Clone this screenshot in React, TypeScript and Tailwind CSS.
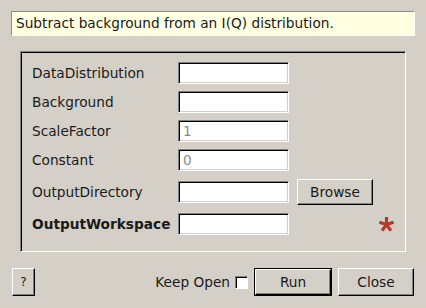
const FONT = "font-['DejaVu_Sans',sans-serif]"

const sunken = 'border border-t-[#808080] border-l-[#808080] border-b-white border-r-white shadow-[inset_1px_1px_0_#000,inset_-1px_-1px_0_#d4d0c8]'
const raised = 'border border-t-white border-l-white border-b-black border-r-black shadow-[inset_-1px_-1px_0_#808080]'

function Field({ value }: { value?: string }) {
  return (
    <div className={`w-[111px] h-[22px] bg-white ${sunken} flex items-center pl-[4px] text-[#8a8a8a]`}>
      {value}
    </div>
  )
}

function Row({ label, bold, value, className = '', children }: { label: string; bold?: boolean; value?: string; className?: string; children?: React.ReactNode }) {
  return (
    <div className={`flex items-center ${className}`}>
      <div className={`w-[146px] ${bold ? 'font-bold' : ''}`}>{label}</div>
      <Field value={value} />
      {children}
    </div>
  )
}

function Asterisk() {
  const arms = [-90, -18, 54, 126, 198]
  return (
    <svg width="17" height="17" viewBox="-8.5 -8.5 17 17" className="ml-[89px]">
      {arms.map(a => {
        const r = (a * Math.PI) / 180
        return <line key={a} x1="0" y1="0" x2={7.5 * Math.cos(r)} y2={7.5 * Math.sin(r)} stroke="#b33a2a" strokeWidth="3.2" strokeLinecap="butt" />
      })}
    </svg>
  )
}

export default function App() {
  return (
    <div className={`w-[426px] h-[308px] bg-[#d4d0c8] text-[13.7px] text-[#1a1a1a] flex flex-col overflow-hidden ${FONT}`}>
      <div className="mt-[11px] mx-[11px] h-[25px] bg-[#ffffe1] border border-t-[#8a8a8a] border-l-[#8a8a8a] border-b-white border-r-white flex items-center pl-[4px]">
        Subtract background from an I(Q) distribution.
      </div>

      <div className="mt-[15px] ml-[20px] w-[386px] h-[201px] border border-t-[#808080] border-l-[#808080] border-b-white border-r-white shadow-[inset_1px_1px_0_#000] pl-[11px] pt-[10px] flex flex-col">
        <Row label="DataDistribution" />
        <Row label="Background" className="mt-[7px]" />
        <Row label="ScaleFactor" value="1" className="mt-[7px]" />
        <Row label="Constant" value="0" className="mt-[7px]" />
        <Row label="OutputDirectory" className="mt-[8px] h-[26px]">
          <button className={`ml-[8px] w-[76px] h-[26px] bg-[#d4d0c8] ${raised}`}>Browse</button>
        </Row>
        <Row label="OutputWorkspace" bold className="mt-[8px]">
          <Asterisk />
        </Row>
      </div>

      <div className="mt-[16px] flex items-center pl-[12px] pr-[12px]">
        <button className={`w-[23px] h-[28px] bg-[#d4d0c8] ${raised} text-[12px]`}>?</button>
        <div className="flex-1" />
        <span>Keep Open</span>
        <div className="ml-[5px] w-[13px] h-[13px] bg-white border border-t-[#808080] border-l-[#808080] border-b-white border-r-white shadow-[inset_1px_1px_0_#000]" />
        <div className="ml-[6px] w-[78px] h-[28px] border border-black">
          <button className={`w-full h-full bg-[#d4d0c8] ${raised}`}>Run</button>
        </div>
        <button className={`ml-[6px] w-[76px] h-[28px] bg-[#d4d0c8] ${raised}`}>Close</button>
      </div>
    </div>
  )
}
